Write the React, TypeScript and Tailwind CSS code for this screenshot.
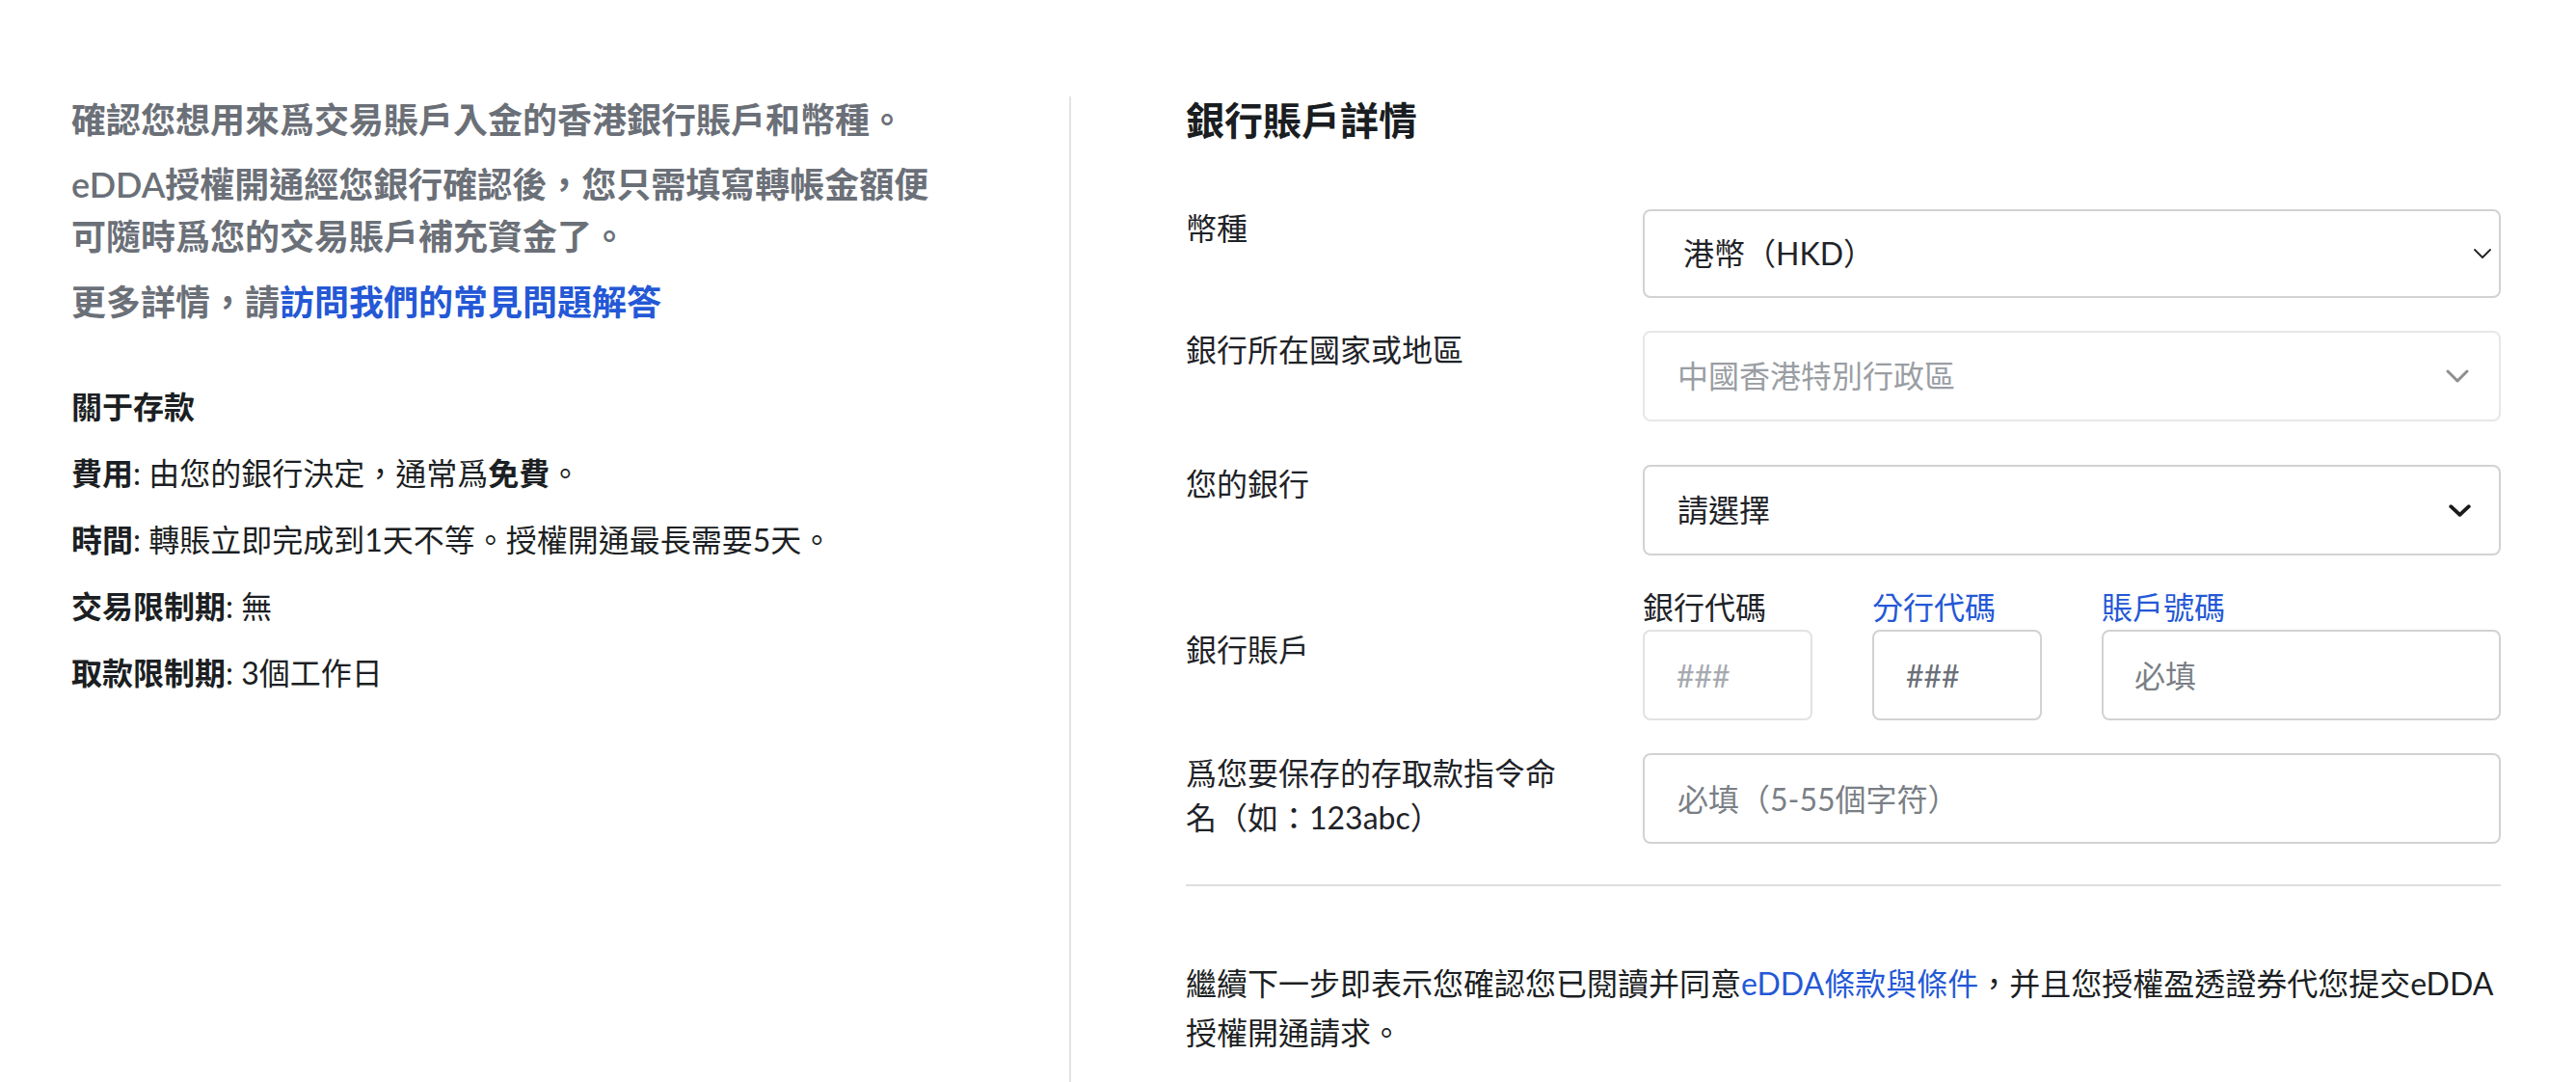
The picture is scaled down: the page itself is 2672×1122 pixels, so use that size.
import React from "react";

type ChevronVariant = "thin" | "muted" | "bold";

function Chevron({ variant }: { variant: ChevronVariant }) {
  if (variant === "thin") {
    return (
      <svg width="18" height="10" viewBox="0 0 18 10" fill="none">
        <polyline points="1,1 9,9 17,1" stroke="#222" strokeWidth="1.8" strokeLinecap="round" strokeLinejoin="round" />
      </svg>
    );
  }
  if (variant === "muted") {
    return (
      <svg width="24" height="14" viewBox="0 0 24 14" fill="none">
        <polyline points="2,2 12,12 22,2" stroke="#8e8e8e" strokeWidth="3" strokeLinecap="round" strokeLinejoin="round" />
      </svg>
    );
  }
  return (
    <svg width="23" height="13" viewBox="0 0 23 13" fill="none">
      <polyline points="2.2,2.2 11.5,10.8 20.8,2.2" stroke="#1a1a1a" strokeWidth="3.8" strokeLinecap="round" strokeLinejoin="round" />
    </svg>
  );
}

function FieldRow({
  label,
  children,
  className = "",
}: {
  label: React.ReactNode;
  children: React.ReactNode;
  className?: string;
}) {
  return (
    <div className={`flex items-start ${className}`}>
      <div className="w-[474px] shrink-0 text-[32px] leading-[40px]">{label}</div>
      <div className="flex-1">{children}</div>
    </div>
  );
}

export default function App() {
  return (
    <div className="min-h-screen bg-white flex pt-[100px] font-[Lato,'Noto_Sans_CJK_TC',sans-serif] text-[#1f2328]">
      {/* Left: intro + deposit info */}
      <div className="w-[1109px] shrink-0 pl-[74px] -mt-[3px]">
        <div className="w-[905px] text-[36px] leading-[54px] font-semibold text-[#6b7078]">
          <p>確認您想用來爲交易賬戶入金的香港銀行賬戶和幣種。</p>
          <p className="mt-[13px]">eDDA授權開通經您銀行確認後，您只需填寫轉帳金額便可隨時爲您的交易賬戶補充資金了。</p>
          <p className="mt-[14px]">
            更多詳情，請<a className="text-[#2458d6]">訪問我們的常見問題解答</a>
          </p>
        </div>

        <div className="mt-[58px] flex flex-col gap-[21px] text-[32px] leading-[48px] text-[#1c1f23]">
          <div className="font-bold">關于存款</div>
          <div>
            <span className="font-bold">費用</span>: 由您的銀行決定，通常爲<span className="font-bold">免費</span>。
          </div>
          <div>
            <span className="font-bold">時間</span>: 轉賬立即完成到1天不等。授權開通最長需要5天。
          </div>
          <div>
            <span className="font-bold">交易限制期</span>: 無
          </div>
          <div>
            <span className="font-bold">取款限制期</span>: 3個工作日
          </div>
        </div>
      </div>

      {/* Right: bank account form */}
      <div className="flex-1 border-l-2 border-[#e3e3e3] pl-[119px] pr-[78px]">
        <h2 className="text-[40px] leading-[50px] font-semibold text-[#1a1d21]">銀行賬戶詳情</h2>

        <div className="mt-[67px]">
          <FieldRow label="幣種" className="mb-[34px]">
            <div className="h-[92px] flex items-center justify-between rounded-[8px] border-2 border-[#d2d2d2] pl-[40px] pr-[8px] text-[32px]">
              <span>港幣（HKD）</span>
              <Chevron variant="thin" />
            </div>
          </FieldRow>

          <FieldRow label="銀行所在國家或地區" className="mb-[45px]">
            <div className="h-[94px] flex items-center justify-between rounded-[8px] border-2 border-[#e7e7e7] pl-[34px] pr-[31px] text-[32px] text-[#9a9ea3]">
              <span>中國香港特別行政區</span>
              <Chevron variant="muted" />
            </div>
          </FieldRow>

          <FieldRow label="您的銀行" className="mb-[34px]">
            <div className="h-[94px] flex items-center justify-between rounded-[8px] border-2 border-[#d2d2d2] pl-[34px] pr-[29px] text-[32px]">
              <span>請選擇</span>
              <Chevron variant="bold" />
            </div>
          </FieldRow>

          <FieldRow label={<div className="pt-[44px]">銀行賬戶</div>} className="mb-[34px]">
            <div className="flex gap-[62px]">
              <div className="w-[176px] shrink-0">
                <div className="text-[32px] leading-[40px] mb-[3px]">銀行代碼</div>
                <input
                  disabled
                  placeholder="###"
                  className="w-full h-[94px] rounded-[8px] border-2 border-[#e2e2e2] bg-white px-[33px] text-[32px] outline-none placeholder:text-[#a6aab0]"
                />
              </div>
              <div className="w-[176px] shrink-0">
                <div className="text-[32px] leading-[40px] mb-[3px] text-[#2458d6]">分行代碼</div>
                <input
                  placeholder="###"
                  className="w-full h-[94px] rounded-[8px] border-2 border-[#d2d2d2] bg-white px-[33px] text-[32px] outline-none placeholder:text-[#6b7078]"
                />
              </div>
              <div className="flex-1">
                <div className="text-[32px] leading-[40px] mb-[3px] text-[#2458d6]">賬戶號碼</div>
                <input
                  placeholder="必填"
                  className="w-full h-[94px] rounded-[8px] border-2 border-[#d2d2d2] bg-white px-[32px] text-[32px] outline-none placeholder:text-[#7a7f86]"
                />
              </div>
            </div>
          </FieldRow>

          <FieldRow label={<div className="max-w-[400px] leading-[46px] -mt-[2px]">爲您要保存的存取款指令命名（如：123abc）</div>}>
            <input
              placeholder="必填（5-55個字符）"
              className="w-full h-[94px] rounded-[8px] border-2 border-[#d2d2d2] bg-white px-[34px] text-[32px] outline-none placeholder:text-[#7a7f86]"
            />
          </FieldRow>
        </div>

        <div className="mt-[42px] h-[2px] bg-[#dedede]" />

        <p className="mt-[75px] text-[32px] leading-[51px] text-[#1c1f23]">
          繼續下一步即表示您確認您已閱讀并同意<a className="text-[#2458d6]">eDDA條款與條件</a>，并且您授權盈透證券代您提交eDDA授權開通請求。
        </p>
      </div>
    </div>
  );
}
